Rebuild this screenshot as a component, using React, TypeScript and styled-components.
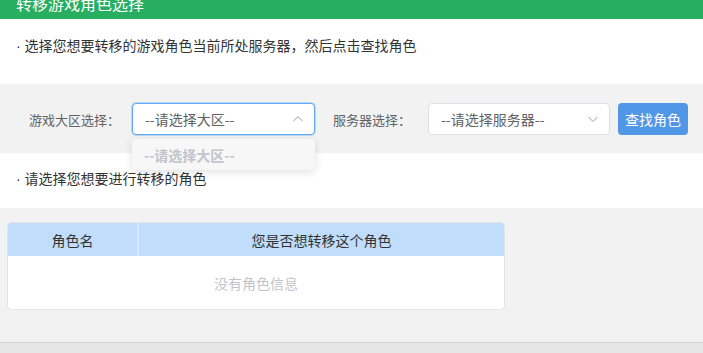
import React from "react";
import styled, { createGlobalStyle } from "styled-components";

const GlobalStyle = createGlobalStyle`
  html, body { margin: 0; padding: 0; }
  body {
    background: #e6e6e6;
    font-family: "Noto Sans CJK SC", "Noto Sans", sans-serif;
    color: #333;
    overflow: hidden;
  }
`;

const Page = styled.div`
  display: flex;
  flex-direction: column;
  height: 342px;
  overflow: hidden;
  border-bottom: 1px solid #d2d2d2;
  background: #f2f2f2;
`;

const Header = styled.div`
  margin-top: -10px;
  height: 29px;
  line-height: 27px;
  padding: 0 16px;
  background: #27ae60;
  color: #fff;
  font-size: 16px;
  flex-shrink: 0;
`;

const Note = styled.div<{ $top: number; $bottom: number }>`
  background: #fff;
  padding: ${(p) => p.$top}px 16px ${(p) => p.$bottom}px;
  font-family: "Liberation Sans", "Noto Sans CJK SC", sans-serif;
  font-size: 14px;
  line-height: 20px;
  color: #333;
  flex-shrink: 0;
`;

const FilterBar = styled.div`
  display: flex;
  align-items: center;
  padding: 19px 0 18px 29px;
  background: #f2f2f2;
  flex-shrink: 0;
`;

const Label = styled.span<{ $width: number }>`
  width: ${(p) => p.$width}px;
  font-size: 13px;
  color: #606266;
  flex-shrink: 0;
`;

const SelectWrap = styled.div<{ $width: number; $gap: number }>`
  position: relative;
  width: ${(p) => p.$width}px;
  margin-right: ${(p) => p.$gap}px;
  flex-shrink: 0;
`;

const SelectBox = styled.div<{ $focused?: boolean }>`
  box-sizing: border-box;
  height: 32px;
  display: flex;
  align-items: center;
  justify-content: space-between;
  padding: 0 10px 0 12px;
  background: #fff;
  border: 1px solid ${(p) => (p.$focused ? "#5eaaf8" : "#dcdfe6")};
  box-shadow: ${(p) => (p.$focused ? "0 0 0 1px rgba(94,170,248,0.35)" : "none")};
  border-radius: 4px;
  font-size: 14px;
  color: #606266;
`;

const Menu = styled.div`
  position: absolute;
  left: 0;
  right: 0;
  top: 36px;
  height: 31px;
  display: flex;
  align-items: center;
  padding-left: 12px;
  background: #f7f7f7;
  border-radius: 4px;
  box-shadow: 0 2px 8px rgba(0, 0, 0, 0.12);
  font-size: 14px;
  font-weight: 700;
  color: #c0c4cc;
  z-index: 2;
`;

const Button = styled.button`
  height: 32px;
  width: 70px;
  border: none;
  border-radius: 4px;
  background: #5197e8;
  color: #fff;
  font-family: inherit;
  font-size: 14px;
  padding: 0;
`;

const TableArea = styled.div`
  flex: 1;
  padding: 14px 0 0 7px;
  background: #f2f2f2;
`;

const Table = styled.div`
  width: 498px;
  box-sizing: border-box;
  border: 1px solid #e4e4e4;
  border-radius: 4px;
  overflow: hidden;
  background: #fff;
`;

const HeadRow = styled.div`
  display: grid;
  grid-template-columns: 131px 1fr;
  height: 33px;
  background: #c0ddfb;
`;

const HeadCell = styled.div<{ $divider?: boolean }>`
  display: flex;
  align-items: center;
  justify-content: center;
  font-size: 14px;
  color: #333;
  border-right: ${(p) => (p.$divider ? "2px solid #dae6f3" : "none")};
`;

const EmptyRow = styled.div`
  height: 53px;
  display: flex;
  align-items: center;
  justify-content: center;
  font-size: 14px;
  color: #c0c4cc;
`;

const Chevron = ({ up }: { up?: boolean }) => (
  <svg width="12" height="12" viewBox="0 0 12 12" fill="none">
    <path
      d={up ? "M1.5 8 L6 3.5 L10.5 8" : "M1.5 4 L6 8.5 L10.5 4"}
      stroke="#c0c4cc"
      strokeWidth="1.1"
    />
  </svg>
);

export default function App() {
  return (
    <>
      <GlobalStyle />
      <Page>
        <Header>转移游戏角色选择</Header>
        <Note $top={17} $bottom={28}>· 选择您想要转移的游戏角色当前所处服务器，然后点击查找角色</Note>
        <FilterBar>
          <Label $width={103}>游戏大区选择：</Label>
          <SelectWrap $width={183} $gap={18}>
            <SelectBox $focused>
              <span>--请选择大区--</span>
              <Chevron up />
            </SelectBox>
            <Menu>--请选择大区--</Menu>
          </SelectWrap>
          <Label $width={95}>服务器选择：</Label>
          <SelectWrap $width={182} $gap={8}>
            <SelectBox>
              <span>--请选择服务器--</span>
              <Chevron />
            </SelectBox>
          </SelectWrap>
          <Button>查找角色</Button>
        </FilterBar>
        <Note $top={16} $bottom={19}>· 请选择您想要进行转移的角色</Note>
        <TableArea>
          <Table>
            <HeadRow>
              <HeadCell $divider>角色名</HeadCell>
              <HeadCell>您是否想转移这个角色</HeadCell>
            </HeadRow>
            <EmptyRow>没有角色信息</EmptyRow>
          </Table>
        </TableArea>
      </Page>
    </>
  );
}
